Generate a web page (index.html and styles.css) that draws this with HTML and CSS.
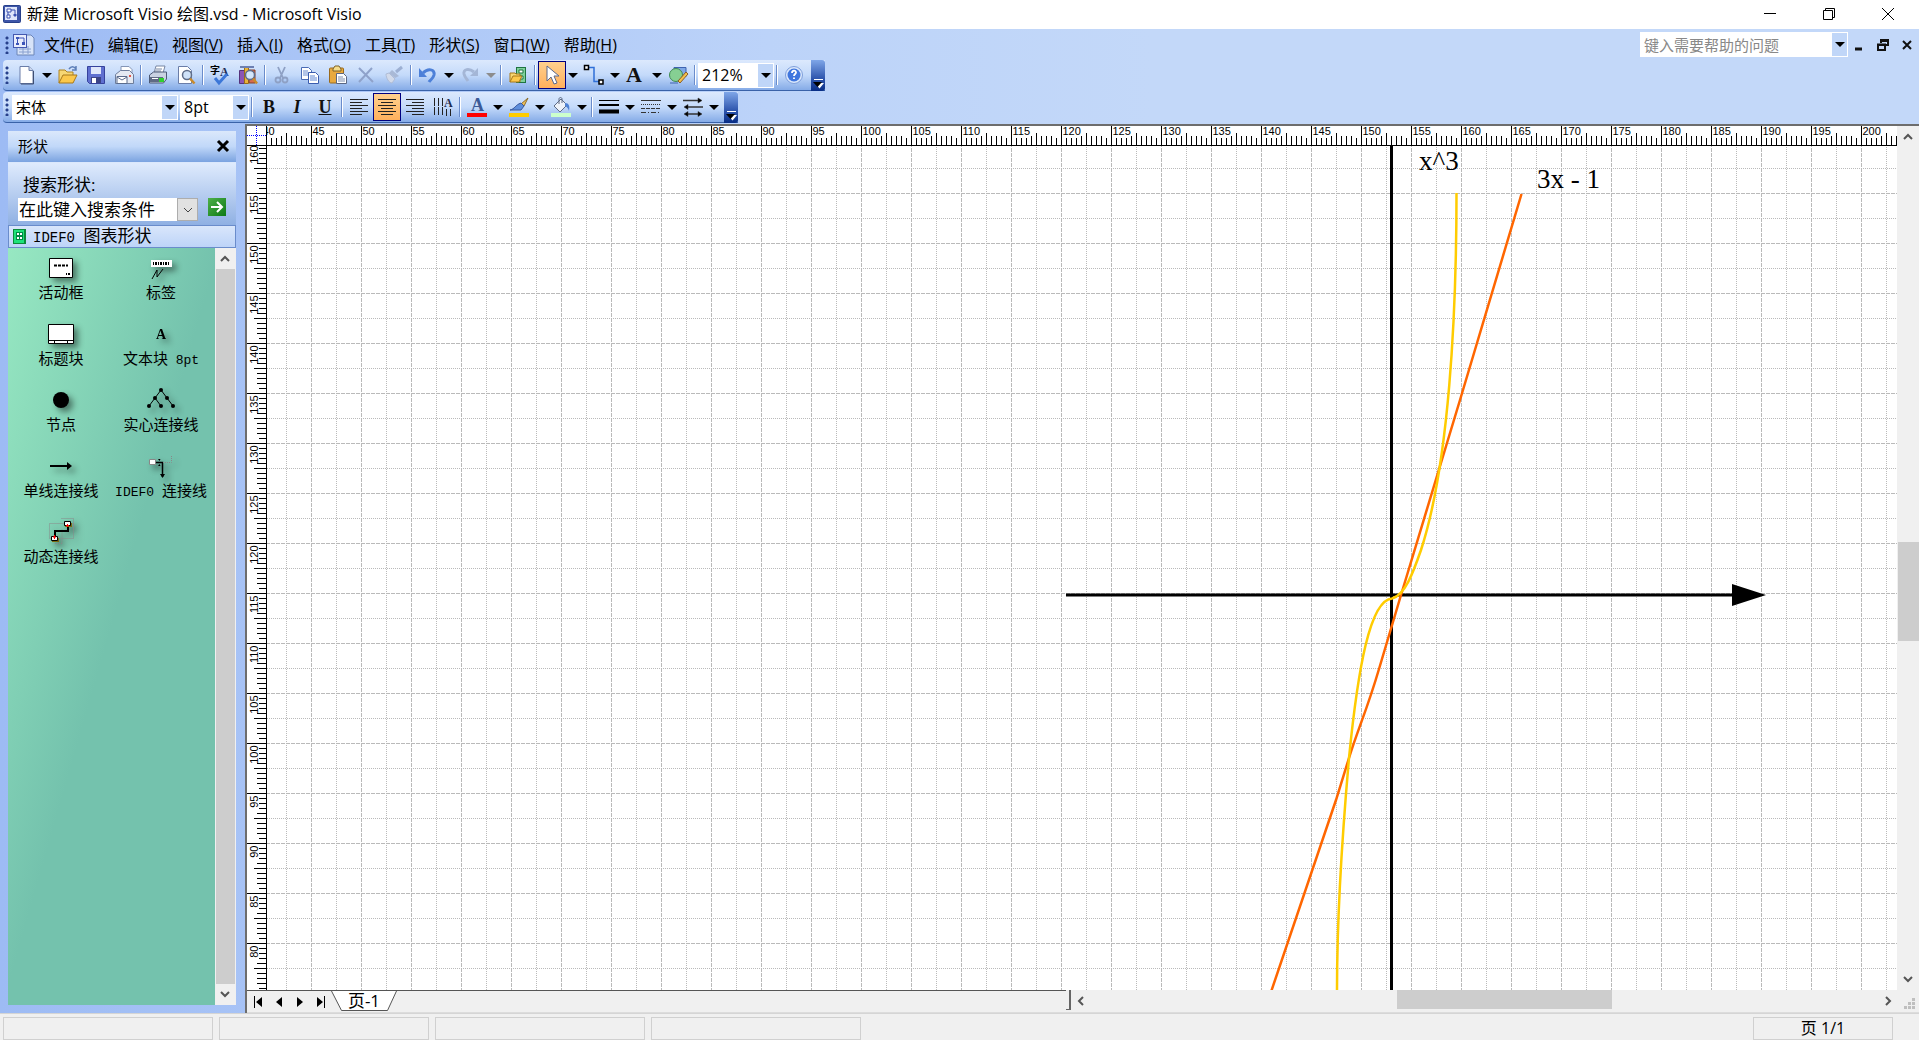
FILE: index.html
```html
<!DOCTYPE html>
<html lang="zh-CN">
<head>
  <meta charset="UTF-8">
  <title>新建 Microsoft Visio 绘图.vsd - Microsoft Visio</title>
  <link rel="stylesheet" href="styles.css">
</head>
<body>
  <header class="titlebar">
    <svg class="app-icon" viewBox="0 0 18 18"><rect x=".5" y=".5" width="17" height="17" rx="1" fill="#3d55a8" stroke="#27408b"/><path d="M2 2h12v13H2z" fill="#dfe6fa"/><path d="M4 4h4v3H4zM4 10h3v3H4z" fill="#fff" stroke="#3a50b0"/><path d="M10 10l2-2 2 2-2 2z" fill="#3a50b0"/><path d="M8 5h4v3M5 7v3" fill="none" stroke="#3a50b0"/></svg>
    <h1>新建 Microsoft Visio 绘图.vsd - Microsoft Visio</h1>
    <div class="window-buttons">
      <button aria-label="最小化"><svg viewBox="0 0 12 12"><path d="M0 5.500h12"/></svg></button>
      <button aria-label="还原"><svg viewBox="0 0 12 12"><path d="M.5 2.500h9v9h-9zM2.500 2.500v-2h9v9h-2"/></svg></button>
      <button aria-label="关闭"><svg viewBox="0 0 12 12"><path d="M0 0l12 12M12 0L0 12"/></svg></button>
    </div>
  </header>

  <nav class="menubar">
    <span class="grip"></span>
    <svg class="doc-icon" viewBox="0 0 22 22"><path d="M9 1h9l3 3v17H4v-8" fill="#d7e3f8" stroke="#6d86b8"/><path d="M6 15h12M6 18h12M10 12v8M15 12v8" stroke="#88a0d0"/><rect x=".5" y=".5" width="13" height="13" fill="#e8edfc" stroke="#4459b0"/><path d="M3 3h3v2H3zM3 9h3v2H3zM9 8h3v3H9z" fill="#3d55b8"/><path d="M6 4h5v4M4.500 5v4" fill="none" stroke="#3d55b8"/></svg>
    <button>文件(<u>F</u>)</button>
    <button>编辑(<u>E</u>)</button>
    <button>视图(<u>V</u>)</button>
    <button>插入(<u>I</u>)</button>
    <button>格式(<u>O</u>)</button>
    <button>工具(<u>T</u>)</button>
    <button>形状(<u>S</u>)</button>
    <button>窗口(<u>W</u>)</button>
    <button>帮助(<u>H</u>)</button>
    <div class="combo help-box">
      <input type="text" placeholder="键入需要帮助的问题" aria-label="键入需要帮助的问题">
      <button class="combo-arrow" aria-label="最近的问题"></button>
    </div>
    <div class="doc-buttons">
      <button aria-label="最小化文档"><svg viewBox="0 0 12 12"><path d="M2 10h7" stroke-width="3"/></svg></button>
      <button aria-label="还原文档"><svg viewBox="0 0 12 12"><path d="M4 4V1h7v5H9M3.500 2h8" /><path d="M1 5.500h7V11H1zM1 6h7" /></svg></button>
      <button aria-label="关闭文档"><svg viewBox="0 0 12 12"><path d="M2 2l8 8M10 2l-8 8"/></svg></button>
    </div>
  </nav>

  <div class="toolbar">
    <span class="grip"></span>
    <button aria-label="新建"><svg viewBox="0 0 20 20"><path d="M4 1.500h9l4 4v13H4z" fill="#fff" stroke="#6a7da8"/><path d="M13 1.500v4h4" fill="#cdd9ef" stroke="#6a7da8"/><path d="M17.500 6v13H5" fill="none" stroke="#3e4e72"/></svg></button>
    <button class="drop" aria-label="新建选项"></button>
    <button aria-label="打开"><svg viewBox="0 0 20 20"><path d="M1 18V5h6l2 2h6v3" fill="#f7d774" stroke="#b08420"/><path d="M1 18l4-8h14l-4 8z" fill="#fbc84c" stroke="#a8791a"/><path d="M11 4c2-3 5-3 7 0M18 1v4h-4" fill="none" stroke="#5d7fb8" stroke-width="1.500"/></svg></button>
    <button aria-label="保存"><svg viewBox="0 0 20 20"><path d="M1.500 1.500h17v17h-15l-2-2z" fill="#5f6fd0" stroke="#36429c"/><path d="M5 2h10v7H5z" fill="#dfe6fa"/><path d="M5 12h10v6H5z" fill="#3c4386"/><path d="M6 13h4v5H6z" fill="#fff"/></svg></button>
    <button aria-label="电子邮件"><svg viewBox="0 0 20 20"><path d="M7 8V1.500h8l3 3V8" fill="#fff" stroke="#8495b6"/><path d="M1.500 9.500l5-4h9l4 4v9h-18z" fill="#e4e9f2" stroke="#6d7d9b"/><path d="M3 11.500h10v7H3z" fill="#fff" stroke="#5a6b8c"/><path d="M3 12l5 3 5-3" fill="none" stroke="#5a6b8c"/><path d="M15 10h2v2h-2z" fill="#e2564a"/></svg></button>
    <span class="sep"></span>
    <button aria-label="打印"><svg viewBox="0 0 20 20"><path d="M6 8l2-7h9l-2 7" fill="#fff" stroke="#7786a3"/><path d="M8 4h6M7 6h6" stroke="#7786a3"/><path d="M1.500 10l4-3h13v7l-3 4h-14z" fill="#c9d2e2" stroke="#4c5a76"/><path d="M2 12h13v5H2z" fill="#5f6b84"/><path d="M11 13h5v4h-5z" fill="#2fd02f"/><path d="M4 13.500h6" stroke="#fff"/></svg></button>
    <button aria-label="打印预览"><svg viewBox="0 0 20 20"><path d="M2.500 1.500h9l4 4v13h-13z" fill="#fff" stroke="#6a7da8"/><circle cx="11" cy="10" r="4.500" fill="#cfe2f8" stroke="#5f6d88" stroke-width="1.500"/><path d="M14 13.500l4.500 5" stroke="#c98b2c" stroke-width="2.500"/></svg></button>
    <span class="sep"></span>
    <button aria-label="拼写检查"><svg viewBox="0 0 20 20"><text x="0" y="9" class="icon-cjk">字</text><text x="10" y="11" class="icon-a">A</text><path d="M5 13l4 5 8-9" fill="none" stroke="#3c77d8" stroke-width="3"/></svg></button>
    <button aria-label="信息检索"><svg viewBox="0 0 20 20"><path d="M1.500 5.500h5v13h-5z" fill="#8b55b5" stroke="#55327c"/><path d="M6.500 2.500h4v16h-4z" fill="#e9b33c" stroke="#9a6e17"/><path d="M11 5h6v13h-6z" fill="#d96b4d" stroke="#83432f"/><path d="M2 2h14" stroke="#6c7fb2" stroke-width="2"/><circle cx="12" cy="10" r="4.500" fill="#d3e6fb" stroke="#5c6d8d" stroke-width="1.500"/><path d="M15 13.500l4 5" stroke="#c98b2c" stroke-width="2.500"/></svg></button>
    <span class="sep"></span>
    <button aria-label="剪切"><svg viewBox="0 0 20 20" fill="none" stroke="#8ea0c4"><path d="M6 2l5 11M13 2L8 13" stroke-width="1.800"/><circle cx="6" cy="15" r="2.500" stroke-width="1.800"/><circle cx="13" cy="15" r="2.500" stroke-width="1.800"/></svg></button>
    <button aria-label="复制"><svg viewBox="0 0 20 20"><path d="M1.500 2.500h7l3 3v9h-10z" fill="#fff" stroke="#4a6bb5"/><path d="M3 6h5M3 8h6M3 10h6" stroke="#6a8cd0"/><path d="M8.500 7.500h7l3 3v8h-10z" fill="#fff" stroke="#3a5cae"/><path d="M10 11h5M10 13h7M10 15h7" stroke="#5f86d2"/></svg></button>
    <button aria-label="粘贴"><svg viewBox="0 0 20 20"><rect x="1.500" y="3" width="14" height="15" rx="1" fill="#e8a93e" stroke="#9a6a1c"/><path d="M5 4l2-3h4l2 3v2H5z" fill="#f5dd8c" stroke="#7f6226"/><path d="M8.500 8.500h7l3 3v7h-10z" fill="#fff" stroke="#5a6682"/><path d="M10 12h5M10 14h7M10 16h7" stroke="#7e8fb0"/></svg></button>
    <button aria-label="删除"><svg viewBox="0 0 20 20"><path d="M3 3l14 14M16 3L3 17" stroke="#8fa2ca" stroke-width="2"/></svg></button>
    <button aria-label="格式刷"><svg viewBox="0 0 20 20"><path d="M18 2l-6 5" stroke="#9db0d3" stroke-width="3"/><path d="M8 5l7 6-4 2-6-5z" fill="#a9b9d6"/><path d="M2 9l3-1 6 6-3 4c-3 0-6-5-6-9z" fill="#d2daea" stroke="#afbcd6"/></svg></button>
    <span class="sep"></span>
    <button aria-label="撤消"><svg viewBox="0 0 20 20"><path d="M5 8c5-5 12-4 11 2-1 4-4 5-5 7" fill="none" stroke="#4d80d8" stroke-width="3"/><path d="M1 3v9h8z" fill="#4d80d8"/></svg></button>
    <button class="drop" aria-label="撤消列表"></button>
    <button aria-label="恢复"><svg viewBox="0 0 20 20"><path d="M14 7C9 3 3 4 4 9c1 4 3 5 4 7" fill="none" stroke="#a4b6d6" stroke-width="3"/><path d="M18 3v8h-8z" fill="#a4b6d6"/></svg></button>
    <button class="drop drop-off" aria-label="恢复列表"></button>
    <span class="sep"></span>
    <button aria-label="形状"><svg viewBox="0 0 20 20"><rect x="8.500" y="2.500" width="9" height="15" fill="#7fd09a" stroke="#1f7440"/><path d="M11 5h4v3h-4zM11 11h4v3h-4z" fill="#fff" stroke="#1f7440"/><path d="M2 17V8h5l1 1h4v8" fill="#f7d774" stroke="#a8791a"/><path d="M2 17l3-6h9l-3 6z" fill="#fbc84c" stroke="#a8791a"/></svg></button>
    <span class="sep"></span>
    <button class="pressed" aria-label="指针工具"><svg viewBox="0 0 20 20"><path d="M5 1v15l4-4 3 7 3-1-3-7h5z" fill="#fff" stroke="#5a688c"/></svg></button>
    <button class="drop" aria-label="指针选项"></button>
    <button aria-label="连接线工具"><svg viewBox="0 0 20 20" fill="none"><path d="M4 2.500h6v14h6" stroke="#2f6fd8" stroke-width="1.500"/><path d="M.5.500h4v4h-4zM15 15h4v4h-4z" fill="#fff" stroke="#000" stroke-width="1.500"/></svg></button>
    <button class="drop" aria-label="连接线选项"></button>
    <button class="letter text-tool" aria-label="文本工具">A</button>
    <button class="drop" aria-label="文本选项"></button>
    <button aria-label="绘图"><svg viewBox="0 0 20 20"><path d="M6 2.500h12v9H6z" fill="#7fa8e6" stroke="#3e63b0"/><circle cx="8" cy="10" r="6.500" fill="#86cf93" stroke="#3f8a50"/><path d="M10 16l8-9 2 2-8 9z" fill="#f3c14b" stroke="#8b5d28"/><path d="M2 18h8" stroke="#3e63b0"/></svg></button>
    <span class="sep"></span>
    <div class="combo zoom-box">
      <select aria-label="显示比例"><option>212%</option><option>100%</option></select>
      <span class="combo-arrow"></span>
    </div>
    <span class="sep"></span>
    <button aria-label="帮助"><svg viewBox="0 0 20 20"><circle cx="10" cy="10" r="8.500" fill="#dbe8fb" stroke="#7f9fdb"/><circle cx="10" cy="10" r="6.500" fill="#3f76de"/><path d="M8 8c0-3 4-3 4-.5 0 1.500-2 1.500-2 3.500M10 12.500v1.500" fill="none" stroke="#fff" stroke-width="1.800"/></svg></button>
    <button class="endcap" aria-label="工具栏选项"><svg viewBox="0 0 11 10"><path d="M1 .5h9" stroke="#fff"/><path d="M2 4h9l-4.500 5.500z" fill="#fff"/><path d="M0 3h9L4.500 8z"/></svg></button>
  </div>

  <div class="toolbar">
    <span class="grip"></span>
    <div class="combo font-box">
      <select aria-label="字体"><option>宋体</option><option>Arial</option></select>
      <span class="combo-arrow"></span>
    </div>
    <div class="combo size-box">
      <select aria-label="字号"><option>8pt</option><option>10pt</option></select>
      <span class="combo-arrow"></span>
    </div>
    <span class="sep"></span>
    <button class="letter" aria-label="加粗">B</button>
    <button class="letter italic" aria-label="倾斜">I</button>
    <button class="letter underline" aria-label="下划线">U</button>
    <span class="sep"></span>
    <button aria-label="左对齐"><svg viewBox="0 0 20 20"><path d="M1 2.500h18M1 5.500h12M1 8.500h18M1 11.500h12M1 14.500h18M1 17.500h12" stroke="#222"/></svg></button>
    <button class="pressed" aria-label="居中"><svg viewBox="0 0 20 20"><path d="M1 2.500h18M4 5.500h12M1 8.500h18M4 11.500h12M1 14.500h18M4 17.500h12" stroke="#222"/></svg></button>
    <button aria-label="右对齐"><svg viewBox="0 0 20 20"><path d="M1 2.500h18M7 5.500h12M1 8.500h18M7 11.500h12M1 14.500h18M7 17.500h12" stroke="#222"/></svg></button>
    <button aria-label="文字方向"><svg viewBox="0 0 20 20"><path d="M1.500 1v18M5.500 1v18M9.500 1v18M13.500 12v7M17.500 12v7" stroke="#222" stroke-dasharray="8 1"/><text x="11" y="10" class="icon-a">A</text></svg></button>
    <span class="sep"></span>
    <button aria-label="字体颜色"><svg viewBox="0 0 20 20"><path d="M0 16h20v4H0z" fill="#f00"/><text x="4" y="14" class="icon-color-a">A</text></svg></button>
    <button class="drop" aria-label="字体颜色选项"></button>
    <button aria-label="线条颜色"><svg viewBox="0 0 20 20"><path d="M19 1l-4 8-3-2z" fill="#f0c25a" stroke="#8b6a28"/><path d="M12 6l3 3-3 4H1c5-1 5-5 11-7z" fill="#5f8fdc" stroke="#39589c"/><path d="M0 16h20v4H0z" fill="#fc0"/></svg></button>
    <button class="drop" aria-label="线条颜色选项"></button>
    <button aria-label="填充颜色"><svg viewBox="0 0 20 20"><path d="M3 9l7-7 6 6-7 7z" fill="#eef2f9" stroke="#5e6b85"/><path d="M8 7V2c0-2 3-2 3 0v4" fill="none" stroke="#5e6b85"/><path d="M14 6c4 0 5 3 4 8-1-3-2-4-4-5z" fill="#4f82d4"/><path d="M0 16h20v4H0z" fill="#cfc"/></svg></button>
    <button class="drop" aria-label="填充颜色选项"></button>
    <span class="sep"></span>
    <button aria-label="线条粗细"><svg viewBox="0 0 20 20" stroke="#000"><path d="M0 3.500h20"/><path d="M0 8h20" stroke-width="2"/><path d="M0 14.500h20" stroke-width="4"/></svg></button>
    <button class="drop" aria-label="线条粗细选项"></button>
    <button aria-label="线型"><svg viewBox="0 0 20 20" stroke="#333"><path d="M0 3.500h20"/><path d="M0 7.500h20" stroke-dasharray="1 1"/><path d="M0 11.500h20" stroke-dasharray="4 1"/><path d="M0 15.500h20" stroke-dasharray="5 2 1 2"/></svg></button>
    <button class="drop" aria-label="线型选项"></button>
    <button aria-label="线端"><svg viewBox="0 0 20 20" stroke="#333" stroke-width="1.500"><path d="M0 3.500h15M20 10H5M4 17h12" fill="none"/><path d="M15 1l4 2.500L15 6zM5 7.500L1 10l4 2.500zM5 14.500L1 17l4 2.500zM15 14.500l4 2.500-4 2.500z" stroke-width=".5"/></svg></button>
    <button class="drop" aria-label="线端选项"></button>
    <button class="endcap" aria-label="格式选项"><svg viewBox="0 0 11 10"><path d="M1 .5h9" stroke="#fff"/><path d="M2 4h9l-4.500 5.500z" fill="#fff"/><path d="M0 3h9L4.500 8z"/></svg></button>
  </div>

  <main class="workspace">
    <aside class="shapes-panel">
      <div class="panel-head">
        <h2>形状</h2>
        <button aria-label="关闭形状窗口"><svg viewBox="0 0 14 14"><path d="M2 2l10 10M12 2L2 12"/></svg></button>
      </div>
      <div class="search">
        <label for="shape-search">搜索形状:</label>
        <div class="search-row">
          <div class="search-combo">
            <select id="shape-search"><option>在此键入搜索条件</option></select>
            <span class="search-arrow"><svg viewBox="0 0 10 6"><path d="M1 1l4 4 4-4"/></svg></span>
          </div>
          <button class="go" aria-label="搜索"><svg viewBox="0 0 18 18"><path d="M3 9h11M9 4l5 5-5 5"/></svg></button>
        </div>
      </div>
      <button class="stencil-head">
        <svg viewBox="0 0 13 15"><path d="M0 0h13v15H0z" fill="#0d8a3a"/><path d="M1 1h10v13H1z" fill="#1de27a"/><path d="M3 3h7v8H3z" fill="#084"/><path d="M4 4h2v2H4zM7 4h2v2H7zM4 8h2v2H4zM7 8h2v2H7z" fill="#fff"/></svg>
        <span><span class="latin">IDEF0 </span>图表形状</span>
      </button>
      <div class="stencil">
        <ul class="shapes">
          <li><svg viewBox="0 0 32 32"><path d="M4.500 6.500h23v19h-23z" fill="#fff" stroke="#000"/><path d="M9 13.500h14" stroke="#000" stroke-width="2" stroke-dasharray="3 1"/><path d="M21 22h1M23 22h2" stroke="#000" stroke-width="2"/></svg>活动框</li>
          <li><svg viewBox="0 0 32 32"><path d="M6 8h21v7H6z" fill="#fff"/><path d="M8 11.500h17" stroke="#000" stroke-width="3" stroke-dasharray="1 1 2 1"/><path d="M7 27l5-9v7l6-8" fill="none" stroke="#000"/></svg>标签</li>
          <li><svg viewBox="0 0 32 32"><path d="M3.500 6.500h25v19h-25z" fill="#fff" stroke="#000"/><path d="M4 22.500h24M9.500 22v3M22.500 22v3" stroke="#000"/></svg>标题块</li>
          <li><svg viewBox="0 0 32 32"><text x="11" y="21" class="shape-a">A</text></svg><span>文本块<span class="latin"> 8pt</span></span></li>
          <li><svg viewBox="0 0 32 32"><circle cx="16" cy="16" r="8"/></svg>节点</li>
          <li><svg viewBox="0 0 32 32"><path d="M16 6L10 14 4 22M16 6l6 8 6 8M10 14l6 8" fill="none" stroke="#000"/><circle cx="16" cy="6" r="2"/><circle cx="10" cy="14" r="2"/><circle cx="22" cy="14" r="2"/><circle cx="4" cy="22" r="2"/><circle cx="16" cy="22" r="2"/><circle cx="28" cy="22" r="2"/></svg>实心连接线</li>
          <li><svg viewBox="0 0 32 32"><path d="M5 15h20v2H5z"/><path d="M22 12l5 4-5 4z"/></svg>单线连接线</li>
          <li><svg viewBox="0 0 32 32"><path d="M4.500 9.500h6v5h-6z" fill="#fff" stroke="#888"/><path d="M11 12.500h6.500V27" fill="none" stroke="#000" stroke-width="1.500"/><path d="M15 24h5l-2.500 4zM13 9l1.500 2 1-2zM13 16l1.500-2 1 2z"/><path d="M18 12.500h8.500V6" fill="none" stroke="#888" stroke-dasharray="1 1"/></svg><span><span class="latin">IDEF0 </span>连接线</span></li>
          <li><svg viewBox="0 0 32 32"><path d="M4.500 7.500h24v15h-24zM16.500 2.500h12v12M10 27.500h7v-15" fill="none" stroke="#888" stroke-dasharray="1 1"/><path d="M10 20v-5h13V9" fill="none" stroke="#000" stroke-width="2"/><path d="M7 22h7v4H7zM20 7h7v4h-7z" fill="#7a6a10"/><path d="M6.500 20.500h6v4h-6zM19.500 5.500h6v4h-6z" fill="#fff" stroke="#000"/><path d="M8 21h3M9.500 19v4M21 9.500h3M22.500 8v3" stroke="#f00"/></svg>动态连接线</li>
        </ul>
        <div class="vscroll">
          <button aria-label="向上"><svg viewBox="0 0 10 7"><path d="M1 6l4-4 4 4"/></svg></button>
          <div class="thumb stencil-thumb"></div>
          <button aria-label="向下"><svg viewBox="0 0 10 7"><path d="M1 1l4 4 4-4"/></svg></button>
        </div>
      </div>
    </aside>

    <section class="drawing">
      <div class="ruler-corner"></div>
      <svg class="ruler-top" id="rulerTop"></svg>
      <svg class="ruler-left" id="rulerLeft"></svg>
      <svg class="page">
        <defs>
          <pattern id="grid" x="44" y="47" width="50" height="50" patternUnits="userSpaceOnUse">
            <path d="M.5 0v50M0 .5h50" class="grid-major"/>
            <path d="M25.500 0v50M0 25.500h50" class="grid-minor"/>
          </pattern>
        </defs>
        <rect width="100%" height="100%" fill="url(#grid)"/>
        <path d="M1124.500 0v2000" class="axis"/>
        <path d="M799 449h670" class="axis"/>
        <path d="M1465 438v22l34-11z"/>
        <path d="M1254.500 48L1193 254 1134 449 1112 523C1100 564 1092 580 1082 612L1069 654 1004 846 954 996" class="line"/>
        <path d="M1189.500 47C1189.500 170 1182 318 1154 404 1146 427 1138 449 1125 452.500 1103 454 1091 522 1082 612 1076 680 1070 760 1070 844V996" class="cubic"/>
        <text x="1152" y="24" class="formula">x^3</text>
        <text x="1270" y="42" class="formula">3x - 1</text>
      </svg>
      <div class="vscroll page-vscroll">
        <button aria-label="向上"><svg viewBox="0 0 10 7"><path d="M1 6l4-4 4 4"/></svg></button>
        <div class="track"><div class="thumb page-thumb"></div></div>
        <button aria-label="向下"><svg viewBox="0 0 10 7"><path d="M1 1l4 4 4-4"/></svg></button>
      </div>
      <div class="bottom-row">
        <div class="page-tabs">
          <button aria-label="第一页"><svg viewBox="0 0 10 12"><path d="M1 0h1v12H1zM9 1v10L3 6z"/></svg></button>
          <button aria-label="上一页"><svg viewBox="0 0 10 12"><path d="M8 1v10L2 6z"/></svg></button>
          <button aria-label="下一页"><svg viewBox="0 0 10 12"><path d="M2 1v10l6-5z"/></svg></button>
          <button aria-label="最后一页"><svg viewBox="0 0 10 12"><path d="M8 0h1v12H8zM1 1v10l6-5z"/></svg></button>
          <button class="tab"><svg viewBox="0 0 66 20"><path d="M.5 0l10 19.500h46L65.500 0" fill="#fff" stroke="#555"/></svg><span>页-1</span></button>
        </div>
        <div class="splitter"></div>
        <div class="hscroll">
          <button aria-label="向左"><svg viewBox="0 0 7 10"><path d="M6 1L2 5l4 4"/></svg></button>
          <div class="track"><div class="thumb hthumb"></div></div>
          <button aria-label="向右"><svg viewBox="0 0 7 10"><path d="M1 1l4 4-4 4"/></svg></button>
        </div>
        <svg class="resize" viewBox="0 0 12 12"><path d="M8 0h3v3H8zM4 4h3v3H4zM8 4h3v3H8zM0 8h3v3H0zM4 8h3v3H4zM8 8h3v3H8z"/></svg>
      </div>
    </section>
  </main>

  <footer class="statusbar">
    <span></span>
    <span></span>
    <span></span>
    <span></span>
    <span class="page-count">页 1/1</span>
  </footer>

  <script src="ruler.js"></script>
</body>
</html>
```

FILE: styles.css
```css
* {
  box-sizing: border-box;
}
body {
  margin: 0;
  height: 100vh;
  display: flex;
  flex-direction: column;
  overflow: hidden;
  background: linear-gradient(to right, #9dbbf4, #bcd3f9 40%, #c3d8f9 60%);
  font: 15px/20px "Open Sans", "Noto Sans CJK SC", sans-serif;
  color: #000;
}
button {
  padding: 0;
  border: 0;
  background: none;
  font: inherit;
  color: inherit;
}
select, input {
  min-width: 0;
  margin: 0;
  padding: 0 3px;
  border: 0;
  border-radius: 0;
  background: #fff;
  font: inherit;
  color: inherit;
  appearance: none;
}
h1, h2 {
  margin: 0;
  font-size: 15px;
  font-weight: normal;
}
svg {
  display: block;
}

/* title bar */
.titlebar {
  height: 29px;
  flex: none;
  display: flex;
  align-items: center;
  padding: 0 2px 2px 3px;
  background: #fff;
}
.titlebar h1 {
  font-size: 16px;
}
.app-icon {
  width: 18px;
  height: 18px;
  margin-right: 6px;
}
.window-buttons {
  display: flex;
  margin-left: auto;
}
.window-buttons button {
  width: 59px;
  height: 27px;
  display: grid;
  place-items: center;
}
.window-buttons svg {
  width: 12px;
  height: 12px;
  fill: none;
  stroke: #000;
}

/* menu bar */
.menubar {
  height: 31px;
  flex: none;
  display: flex;
  align-items: center;
  padding: 0 6px 0 3px;
}
.grip {
  width: 9px;
  height: 18px;
  flex: none;
  background: radial-gradient(circle at 4px 2px, #27408b 1px, transparent 2px) 0 0 / 9px 5px repeat-y;
}
.doc-icon {
  width: 22px;
  height: 22px;
  margin: 0 2px 0 1px;
}
.menubar > button {
  height: 24px;
  padding: 0 7px;
  font-size: 16px;
}
.combo {
  height: 25px;
  flex: none;
  display: flex;
  padding: 1px;
  background: #fff;
}
.combo select, .combo input {
  flex: 1;
}
.combo-arrow, .drop {
  display: grid;
  place-items: center;
}
.combo-arrow {
  width: 15px;
  flex: none;
  background: #c0d6f8;
}
.combo-arrow::after, .drop::after {
  content: "";
  border: 5px solid transparent;
  border-top-color: #000;
  border-bottom: 0;
}
.drop-off::after {
  border-top-color: #8c8c8c;
}
.help-box {
  width: 208px;
  margin-left: auto;
}
.help-box input::placeholder {
  color: #888;
}
.doc-buttons {
  display: flex;
  gap: 12px;
  margin-left: 5px;
}
.doc-buttons svg {
  width: 12px;
  height: 12px;
  fill: none;
  stroke: #111;
  stroke-width: 2;
}

/* toolbars */
.toolbar {
  height: 31px;
  flex: none;
  align-self: flex-start;
  display: flex;
  align-items: center;
  margin: 0 0 1px 3px;
  border-bottom: 1px solid #3a62a8;
  border-radius: 4px 0 0 4px;
  background: linear-gradient(#dce9fd, #c4dafa 50%, #85abe7);
}
.toolbar > button {
  width: 28px;
  height: 28px;
  flex: none;
  display: grid;
  place-items: center;
}
.toolbar > button svg {
  width: 20px;
  height: 20px;
  overflow: visible;
}
.toolbar > .drop {
  width: 14px;
}
.toolbar > .pressed {
  border: 1px solid #000080;
  background: linear-gradient(#ffd08e, #ffb05c);
}
.sep {
  width: 6px;
  height: 20px;
  flex: none;
  background: linear-gradient(to right, transparent 2px, #6a8ccb 2px 3px, #fff 3px 4px, transparent 4px);
}
.toolbar > .letter {
  display: block;
  font: bold 18px/26px "Liberation Serif", serif;
  color: #111;
}
.toolbar > .text-tool {
  padding-right: 4px;
  font-size: 22px;
}
.toolbar > .italic {
  font-style: italic;
}
.toolbar > .underline {
  text-decoration: underline;
}
.icon-cjk {
  font: bold 10px "Noto Sans CJK SC", sans-serif;
}
.icon-a {
  font: bold 12px "Liberation Serif", serif;
  fill: #1e2c50;
}
.icon-color-a {
  font: bold 18px "Liberation Serif", serif;
  fill: #3b5a97;
}
.font-box {
  width: 166px;
  margin-right: 2px;
}
.size-box {
  width: 69px;
  font-size: 16px;
}
.zoom-box {
  width: 76px;
  font-size: 16px;
}
.toolbar > .endcap {
  width: 14px;
  height: 31px;
  margin: 0 0 -1px 3px;
  align-items: end;
  padding-bottom: 2px;
  border-radius: 0 3px 3px 0;
  background: linear-gradient(#7fa6e8, #2e55ad 60%, #082d86);
}
.toolbar > .endcap svg {
  width: 11px;
  height: 10px;
}

/* shapes panel */
.workspace {
  flex: 1;
  min-height: 0;
  display: flex;
}
.shapes-panel {
  width: 228px;
  flex: none;
  display: flex;
  flex-direction: column;
  margin: 7px 9px 8px 8px;
}
.panel-head {
  height: 32px;
  flex: none;
  display: flex;
  align-items: center;
  justify-content: space-between;
  padding: 0 6px 2px 10px;
  border-bottom: 1px solid #dbe8fc;
  background: linear-gradient(#dbe8fb, #c1d8f9 50%, #7ba3e0);
}
.panel-head svg {
  width: 14px;
  height: 14px;
  fill: none;
  stroke: #000;
  stroke-width: 3;
}
.search {
  height: 62px;
  flex: none;
  padding: 12px 8px 0 10px;
  background: linear-gradient(#dfebfd, #8fb0e3);
  font-size: 17px;
}
.search label {
  display: block;
  height: 23px;
  padding-left: 5px;
}
.search-row {
  display: flex;
  justify-content: space-between;
}
.search-combo {
  width: 180px;
  height: 23px;
  display: flex;
}
.search-combo select {
  flex: 1;
  padding: 0 1px;
}
.search-arrow {
  width: 21px;
  display: grid;
  place-items: center;
  border: 1px solid #adadad;
  background: #e1e1e1;
}
.search-arrow svg {
  width: 10px;
  height: 6px;
  fill: none;
  stroke: #444;
}
.go {
  width: 18px;
  height: 18px;
  margin-right: 2px;
  background: linear-gradient(135deg, #4fb04a, #0c7a14);
}
.go svg {
  fill: none;
  stroke: #fff;
  stroke-width: 2;
}
.stencil-head {
  height: 23px;
  flex: none;
  display: flex;
  align-items: center;
  gap: 7px;
  padding-left: 4px;
  border: 1px solid #6a8ccb;
  background: linear-gradient(#d9e6fb, #bdd4f8);
  font-size: 17px;
}
.stencil-head svg {
  width: 13px;
  height: 15px;
}
.latin {
  font-family: "Liberation Mono", monospace;
  font-size: 14px;
}
.stencil {
  flex: 1;
  min-height: 0;
  display: flex;
}
.shapes {
  flex: 1;
  display: grid;
  grid-template-columns: 100px 100px;
  grid-auto-rows: 66px;
  margin: 0;
  padding: 4px 0 0 3px;
  list-style: none;
  white-space: nowrap;
  background: linear-gradient(106deg, #97e8c2, #74c2ad 50%);
}
.shapes li {
  display: flex;
  flex-direction: column;
  align-items: center;
}
.shapes li > svg {
  width: 32px;
  height: 32px;
  margin-bottom: -2px;
  filter: drop-shadow(4px 4px 3px rgba(0, 0, 0, 0.45));
}
.shapes .latin {
  font-size: 13px;
}
.shape-a {
  font: bold 14px "Liberation Serif", serif;
}

/* scrollbars */
.vscroll {
  width: 21px;
  flex: none;
  display: flex;
  flex-direction: column;
  background: #f0f0f0;
}
.vscroll button, .hscroll button {
  width: 20px;
  height: 21px;
  flex: none;
  display: grid;
  place-items: center;
}
.hscroll button {
  width: 18px;
}
.vscroll svg {
  width: 10px;
  height: 7px;
}
.hscroll svg {
  width: 7px;
  height: 10px;
}
.vscroll svg, .hscroll svg {
  fill: none;
  stroke: #555;
  stroke-width: 2;
}
.thumb {
  background: #cdcdcd;
}
.stencil-thumb {
  flex: 1;
  margin: 0 1px;
}
.track {
  flex: 1;
}
.page-thumb {
  height: 12%;
  margin-top: 395px;
}

/* drawing window */
.drawing {
  flex: 1;
  min-width: 0;
  display: grid;
  grid-template-columns: 20px 1fr 22px;
  grid-template-rows: 20px 1fr 23px;
  border: 2px solid #6d6d6d;
  border-width: 2px 0 0 2px;
  background: #f0f0f0;
}
.ruler-corner {
  border: 1px solid #000;
  border-width: 0 1px 1px 0;
  background:
    repeating-linear-gradient(#00f 0 1px, transparent 1px 2px) 9px 0 / 1px 100% no-repeat,
    repeating-linear-gradient(to right, #00f 0 1px, transparent 1px 2px) 0 9px / 100% 1px no-repeat,
    #fff;
}
.ruler-top, .ruler-left {
  width: 100%;
  height: 100%;
  min-height: 0;
  background: #fff;
  font: 11px "Liberation Sans", sans-serif;
  shape-rendering: crispEdges;
}
.ruler-top {
  border-bottom: 1px solid #000;
}
.ruler-left {
  grid-row: 2;
  border-right: 1px solid #000;
}
.ruler-top path, .ruler-left path {
  stroke: #000;
}
.page {
  grid-row: 2;
  grid-column: 2;
  width: 100%;
  height: 100%;
  min-height: 0;
  background: #fff;
}
.grid-major, .grid-minor {
  fill: none;
  stroke: #bababa;
  stroke-dasharray: 4 1;
}
.grid-minor {
  stroke-dasharray: 1 1;
}
.axis {
  stroke: #000;
  stroke-width: 3;
}
.line, .cubic {
  fill: none;
  stroke: #ff6600;
  stroke-width: 2.5;
}
.cubic {
  stroke: #ffcc00;
}
.formula {
  font: 27px "Liberation Serif", serif;
}
.page-vscroll {
  grid-row: 1 / 3;
  grid-column: 3;
  width: 22px;
  padding-left: 1px;
}
.bottom-row {
  grid-row: 3;
  grid-column: 1 / 4;
  display: flex;
  border-bottom: 1px solid #dcdcdc;
}
.page-tabs {
  width: 49%;
  display: flex;
  border-top: 1px solid #555;
}
.page-tabs > button {
  width: 21px;
  display: grid;
  place-items: center;
}
.page-tabs > button svg {
  width: 10px;
  height: 12px;
}
.page-tabs > .tab {
  width: 66px;
  place-items: start;
  font-size: 17px;
}
.page-tabs > .tab svg {
  width: 66px;
  height: 20px;
}
.tab svg, .tab span {
  grid-area: 1 / 1;
}
.page-tabs > .tab span {
  justify-self: center;
}
.splitter {
  width: 5px;
  margin-bottom: 2px;
  border-right: 2px solid #666;
  border-bottom: 1px solid #666;
}
.hscroll {
  flex: 1;
  display: flex;
}
.hthumb {
  width: 215px;
  height: 19px;
  margin-left: 39%;
}
.resize {
  width: 12px;
  height: 12px;
  margin: 8px 3px 0 7px;
  fill: #bfbfbf;
}

/* status bar */
.statusbar {
  height: 27px;
  flex: none;
  display: flex;
  gap: 6px;
  padding: 3px 26px 0 3px;
  border-top: 1px solid #d5d5d5;
  background: #f0f0f0;
}
.statusbar span {
  width: 210px;
  height: 23px;
  border: 1px solid #d0d0d0;
}
.statusbar .page-count {
  width: 140px;
  margin-left: auto;
  text-align: center;
  font-size: 16px;
}
```

FILE: ruler.js
```js
const STEP = 5; // pixels per ruler unit

// tick lengths for the ten positions between two numbered marks
const LENGTHS = [20, 8, 8, 8, 10, 13, 10, 10, 10, 8];

function drawTop(svg) {
  let ticks = '';
  let labels = '';
  for (let i = -10; 44.5 + i * STEP < svg.clientWidth; i++) {
    const x = 44.5 + i * STEP;
    const n = (i + 10) % 10;
    ticks += `M${x} 20V${20 - LENGTHS[n]}`;
    if (n === 0) labels += `<text x="${x + 1}" y="9">${45 + i / 2}</text>`;
  }
  svg.innerHTML = `<path d="${ticks}"/>${labels}`;
}

function drawLeft(svg) {
  let ticks = '';
  let labels = '';
  for (let i = -10; 47.5 + i * STEP < svg.clientHeight; i++) {
    const y = 47.5 + i * STEP;
    const n = (i + 10) % 10;
    ticks += `M20 ${y}H${20 - LENGTHS[n]}`;
    if (n === 0) labels += `<text transform="translate(11 ${y + 2}) rotate(-90)" text-anchor="end">${155 - i / 2}</text>`;
  }
  svg.innerHTML = `<path d="${ticks}"/>${labels}`;
}

function drawRulers() {
  drawTop(document.getElementById('rulerTop'));
  drawLeft(document.getElementById('rulerLeft'));
}

drawRulers();
window.addEventListener('resize', drawRulers);
```
